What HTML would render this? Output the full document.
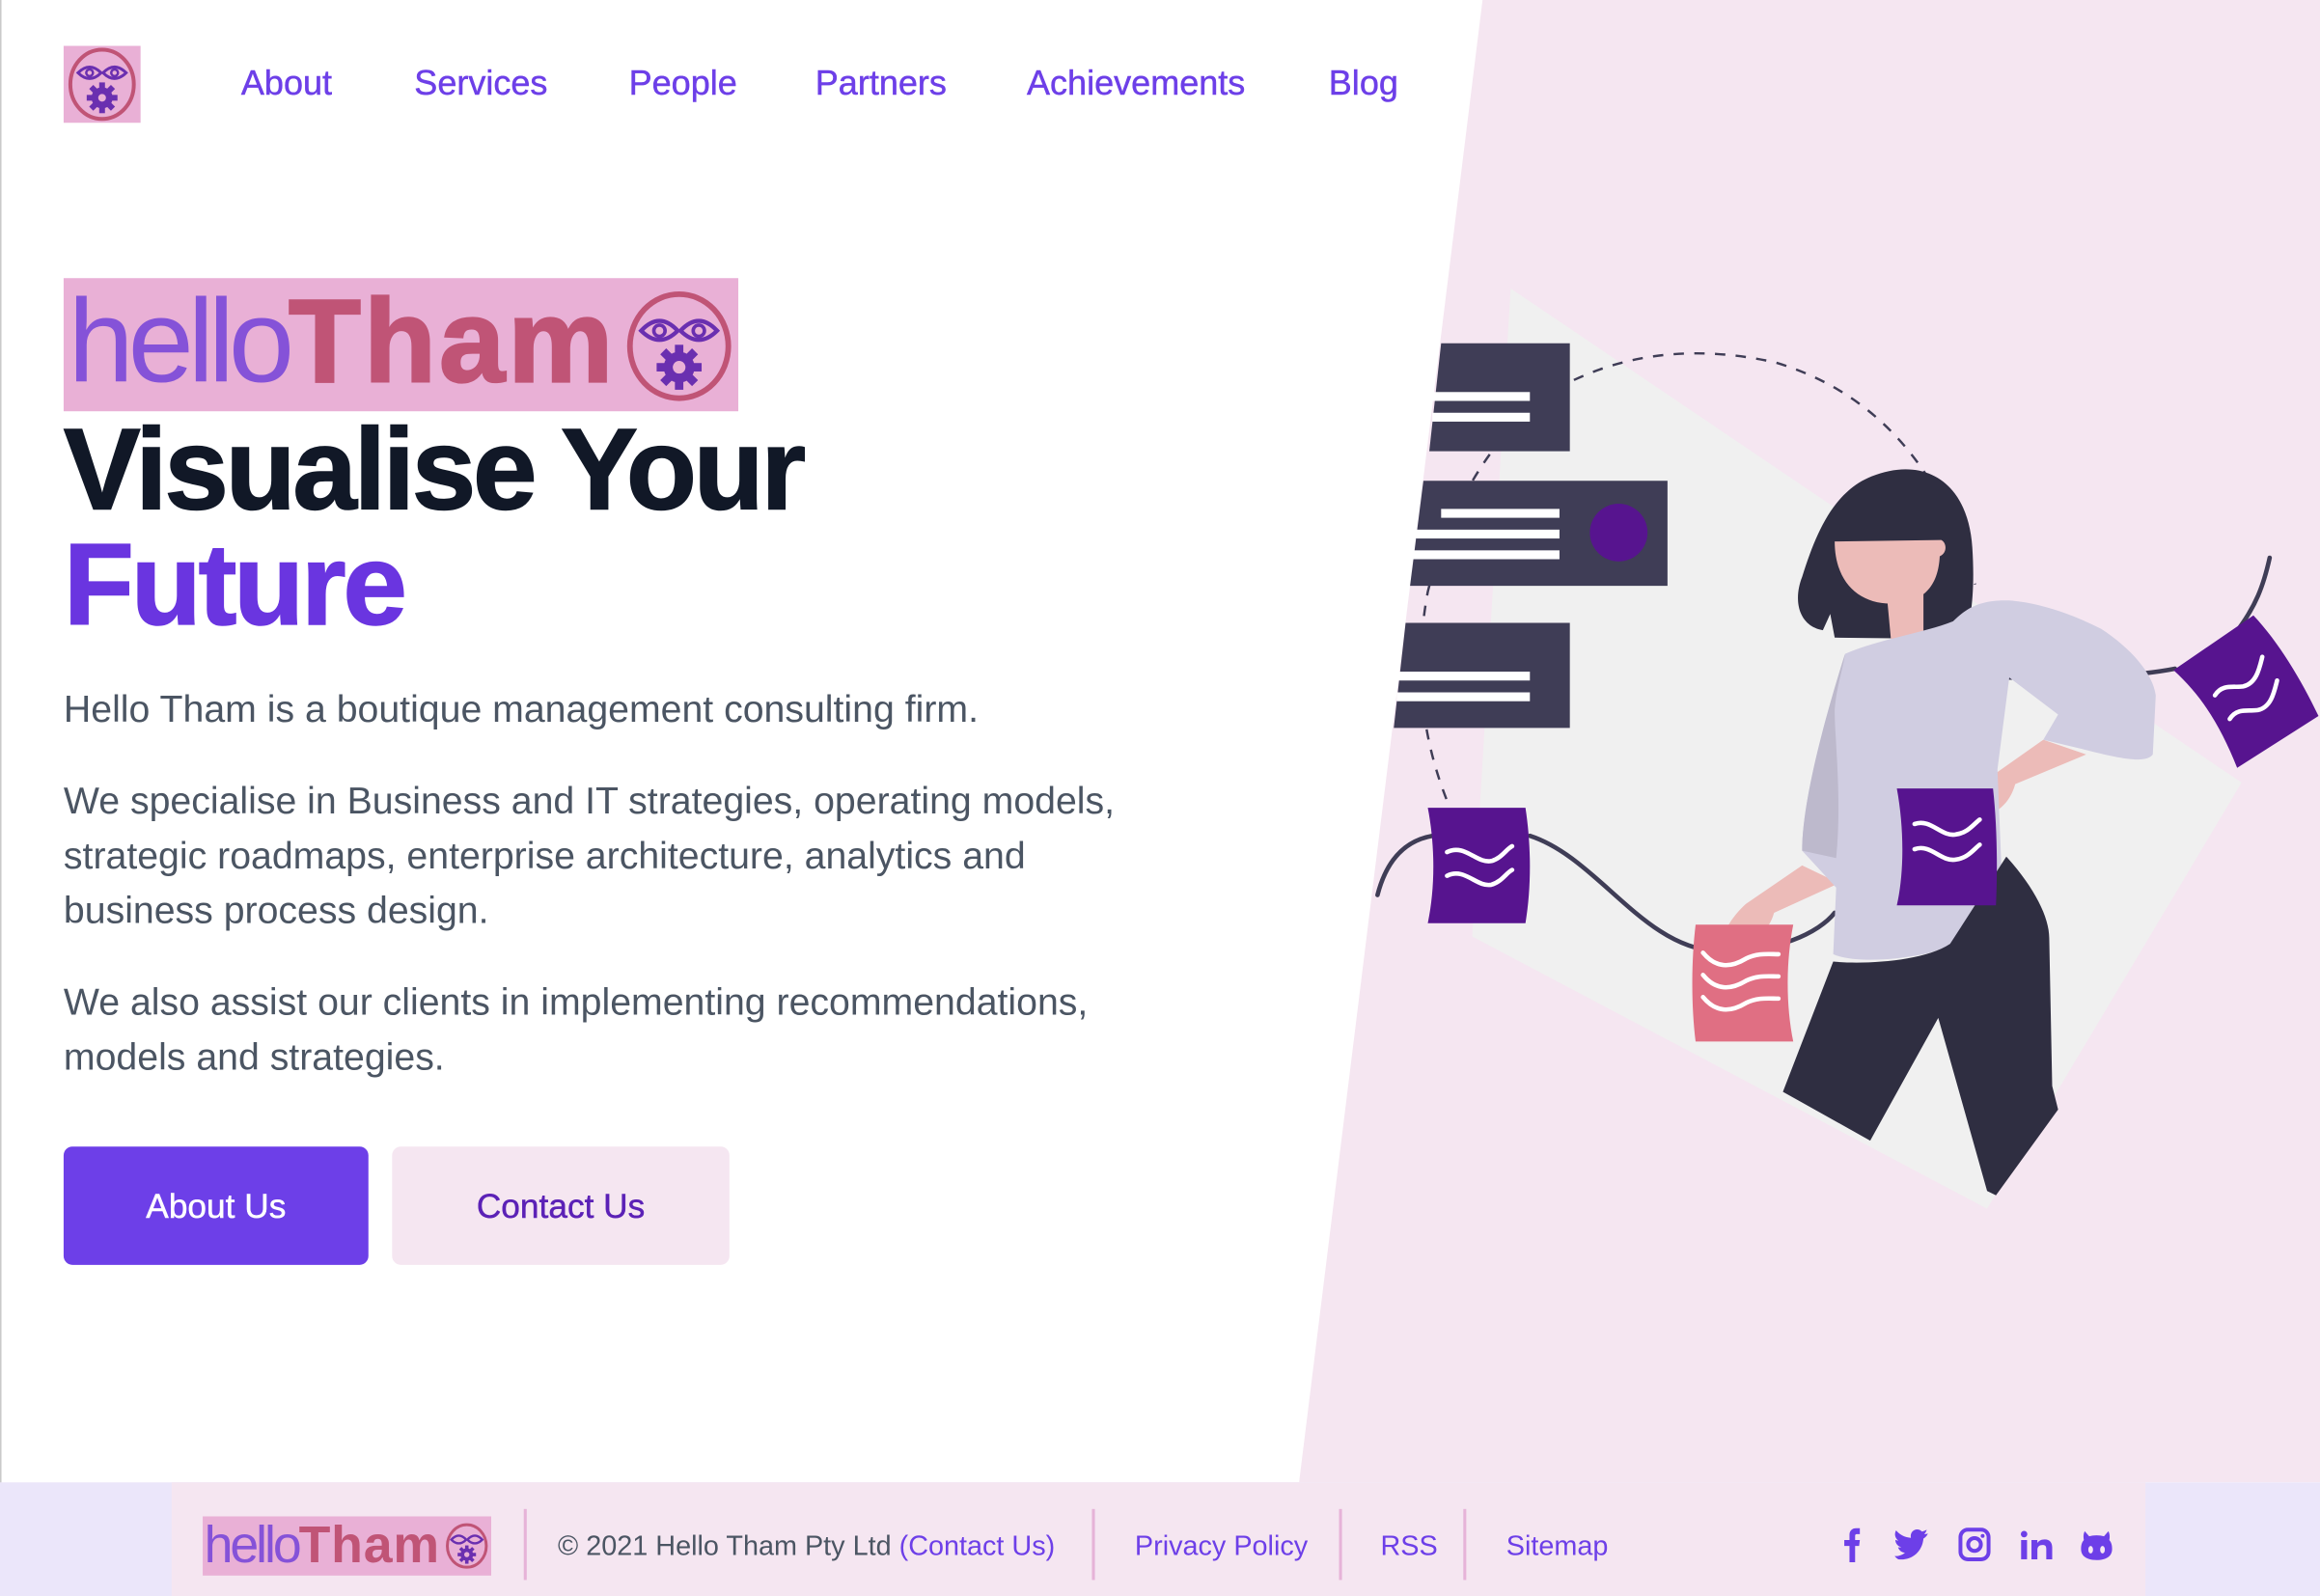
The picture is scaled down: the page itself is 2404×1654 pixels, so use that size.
<!DOCTYPE html>
<html><head><meta charset="utf-8">
<style>
html,body{margin:0;padding:0;width:2404px;height:1654px;overflow:hidden;background:#fff}
#w{position:absolute;left:0;top:0;width:1568px;height:1079px;transform:scale(1.53316);transform-origin:0 0;font-family:"Liberation Sans",Arial,sans-serif;overflow:hidden;background:#fff}
.a{position:absolute}
.nav{position:absolute;top:43px;font-size:23.5px;color:#6d3fe8;white-space:nowrap;-webkit-text-stroke:0.3px #6d3fe8}
.p{position:absolute;left:43px;font-size:25.6px;color:#4b5563;line-height:37px;white-space:nowrap}
.ft{position:absolute;top:1034px;font-size:18.8px;color:#4b5563;white-space:nowrap}
.fl{color:#6d3fe8}
.div{position:absolute;top:1020px;width:2px;height:48px;background:#e6b3d8}
</style></head><body><div id="w">
<div class="a" style="left:0;top:0;width:1568px;height:1002px;background:#f5e6f1;clip-path:polygon(1002px 0,1568px 0,1568px 1002px,878px 1002px)"></div>
<div class="a" style="left:0;top:0;width:1px;height:1079px;background:#c9c9c9"></div>

<div class="a" style="left:43px;top:31px;width:52px;height:52px;background:#e9b0d6">
<svg width="52" height="52" viewBox="0 0 80 80"><ellipse cx="40" cy="40" rx="33" ry="36" fill="none" stroke="#c05476" stroke-width="4"/><path d="M15 28 Q27 16 39 28 Q27 40 15 28Z M41 28 Q53 16 65 28 Q53 40 41 28Z" fill="none" stroke="#6a2fb0" stroke-width="3"/><circle cx="27" cy="28" r="3.5" fill="none" stroke="#6a2fb0" stroke-width="2.5"/><circle cx="53" cy="28" r="3.5" fill="none" stroke="#6a2fb0" stroke-width="2.5"/><g fill="#6a2fb0"><circle cx="40" cy="54" r="11"/><rect x="37" y="38" width="6" height="32"/><rect x="24" y="51" width="32" height="6"/><rect x="37" y="38" width="6" height="32" transform="rotate(45 40 54)"/><rect x="37" y="38" width="6" height="32" transform="rotate(-45 40 54)"/></g><circle cx="40" cy="54" r="4" fill="#e9b0d6"/></svg></div>
<div class="nav" style="left:163px">About</div>
<div class="nav" style="left:280px">Services</div>
<div class="nav" style="left:425px">People</div>
<div class="nav" style="left:551px">Partners</div>
<div class="nav" style="left:694px">Achievements</div>
<div class="nav" style="left:898px">Blog</div>

<div class="a" style="left:43px;top:188px;width:456px;height:90px;background:#e9b0d6;overflow:hidden">
<div class="a" style="left:3px;top:-2px;font-size:80px;line-height:90px;white-space:nowrap"><span style="color:#8552d8;letter-spacing:-4px">hello</span><b style="color:#c05476;letter-spacing:2px;-webkit-text-stroke:1.5px #c05476">Tham</b></div>
<svg class="a" style="left:378px;top:7px" width="76" height="78" viewBox="0 0 80 80"><ellipse cx="40" cy="40" rx="35" ry="37" fill="none" stroke="#c05476" stroke-width="4"/><path d="M13 29 Q26 15 39 29 Q26 42 13 29Z M41 29 Q54 15 67 29 Q54 42 41 29Z" fill="none" stroke="#6a2fb0" stroke-width="3"/><circle cx="26" cy="29" r="4" fill="none" stroke="#6a2fb0" stroke-width="2.5"/><circle cx="54" cy="29" r="4" fill="none" stroke="#6a2fb0" stroke-width="2.5"/><g fill="#6a2fb0"><circle cx="40" cy="55" r="11"/><rect x="37" y="39" width="6" height="32"/><rect x="24" y="52" width="32" height="6"/><rect x="37" y="39" width="6" height="32" transform="rotate(45 40 55)"/><rect x="37" y="39" width="6" height="32" transform="rotate(-45 40 55)"/></g><circle cx="40" cy="55" r="4.5" fill="#e9b0d6"/></svg>
</div>

<div class="a" style="left:43px;top:278px;font-size:78px;line-height:78px;font-weight:bold;letter-spacing:-2.1px;color:#111827;white-space:nowrap;-webkit-text-stroke:1px #111827">Visualise Your<br><span style="color:#6a35e0;-webkit-text-stroke:1px #6a35e0">Future</span></div>

<div class="p" style="top:462px">Hello Tham is a boutique management consulting firm.</div>
<div class="p" style="top:524px">We specialise in Business and IT strategies, operating models,<br>strategic roadmaps, enterprise architecture, analytics and<br>business process design.</div>
<div class="p" style="top:660px">We also assist our clients in implementing recommendations,<br>models and strategies.</div>

<div class="a" style="left:43px;top:775px;width:206px;height:80px;background:#6d3fe8;border-radius:6px;color:#fff;font-size:23px;line-height:80px;text-align:center;-webkit-text-stroke:0.3px #fff">About Us</div>
<div class="a" style="left:265px;top:775px;width:228px;height:80px;background:#f5e6f1;border-radius:6px;color:#5b21b6;font-size:23px;line-height:80px;text-align:center;-webkit-text-stroke:0.3px #5b21b6">Contact Us</div>

<svg class="a" style="left:0;top:0" width="1568" height="1002" viewBox="0 0 1568 1002">
<polygon points="1021,195 1515,529 1343,817 995,633" fill="#f0f0f0"/>
<path d="M983 553 Q950 480 965 400 Q985 320 1040 270 Q1110 225 1200 245 Q1300 275 1335 395" fill="none" stroke="#3f3d56" stroke-width="1.6" stroke-dasharray="7 7"/>
<polygon points="974,232 1061,232 1061,305 966,305" fill="#3f3d56"/>
<rect x="968" y="265" width="66" height="6" fill="#fff"/><rect x="968" y="279" width="66" height="6" fill="#fff"/>
<polygon points="962,325 1127,325 1127,396 953,396" fill="#3f3d56"/>
<rect x="974" y="344" width="80" height="6" fill="#fff"/><rect x="957" y="358" width="97" height="6" fill="#fff"/><rect x="955" y="372" width="99" height="6" fill="#fff"/>
<circle cx="1094" cy="360" r="19.5" fill="#57148f"/>
<polygon points="950,421 1061,421 1061,492 942,492" fill="#3f3d56"/>
<rect x="945" y="454" width="89" height="6" fill="#fff"/><rect x="944" y="468" width="90" height="6" fill="#fff"/>
<path d="M931 605 Q940 570 968 565 M1034 565 C1080 580 1110 640 1160 643 C1200 645 1230 630 1240 617" fill="none" stroke="#3f3d56" stroke-width="3" stroke-linecap="round"/>
<path d="M1358 458 C1400 458 1440 458 1470 452 M1510 429 C1525 410 1530 395 1534 377" fill="none" stroke="#3f3d56" stroke-width="3" stroke-linecap="round"/>
<path d="M1265 322 C1300 308 1330 325 1333 370 C1335 400 1332 420 1328 432 L1240 431 L1237 415 L1232 426 C1215 423 1212 405 1218 390 C1228 358 1240 332 1265 322Z" fill="#2f2e41"/>
<path d="M1240 366 L1312 365 C1316 367 1316 374 1311 376 C1310 396 1300 408 1278 408 C1255 408 1240 392 1240 366Z" fill="#ecbbb8"/>
<path d="M1275 400 L1278 432 L1300 428 L1300 400Z" fill="#ecbbb8"/>
<path d="M1218 585 L1180 611 C1170 620 1163 632 1166 637 C1180 642 1195 632 1199 617 L1243 597Z" fill="#ecbbb8"/>
<path d="M1381 500 L1347 524 C1335 535 1325 545 1329 551 C1345 555 1358 545 1362 530 L1410 510Z" fill="#ecbbb8"/>
<path d="M1247 442 C1270 432 1300 428 1320 420 C1330 410 1340 405 1360 406 C1380 408 1400 415 1420 425 C1440 438 1455 455 1457 470 L1455 510 C1450 517 1430 512 1406 506 L1381 500 L1391 483 L1358 458 L1350 520 L1353 594 C1345 620 1330 638 1300 645 C1275 650 1250 650 1239 645 L1241 600 L1218 575 C1218 540 1235 480 1247 442Z" fill="#d0cde1"/>
<path d="M1247 442 C1235 480 1218 540 1218 575 L1241 580 C1245 540 1240 500 1240 480 C1241 465 1245 455 1247 442Z" fill="#bdb9cc"/>
<path d="M1239 650 C1260 652 1300 650 1318 638 L1356 579 C1375 600 1385 620 1385 634 L1387 734 L1391 750 L1349 808 L1343 805 L1310 688 L1264 771 L1205 738Z" fill="#2f2e41"/>
<path d="M965 546 L1031 546 C1035 572 1035 600 1031 624 L965 624 C970 600 970 572 965 546Z" fill="#57148f"/>
<path d="M978 576 C990 570 998 584 1008 582 C1015 580 1018 574 1022 572 M978 592 C990 586 998 600 1008 598 C1015 596 1018 590 1022 588" fill="none" stroke="#fff" stroke-width="3" stroke-linecap="round"/>
<path d="M1146 625 L1212 625 C1207 650 1207 680 1212 704 L1146 704 C1143 680 1143 650 1146 625Z" fill="#e06f83"/>
<path d="M1151 644 C1160 655 1170 654 1180 648 C1188 644 1195 645 1202 645 M1151 659 C1160 670 1170 669 1180 663 C1188 659 1195 660 1202 660 M1151 674 C1160 685 1170 684 1180 678 C1188 674 1195 675 1202 675" fill="none" stroke="#fff" stroke-width="3" stroke-linecap="round"/>
<path d="M1282 533 L1347 533 C1350 560 1350 590 1349 612 L1282 612 C1287 590 1287 560 1282 533Z" fill="#57148f"/>
<path d="M1294 557 C1305 553 1312 566 1322 564 C1330 563 1334 557 1338 554 M1294 574 C1305 570 1312 583 1322 581 C1330 580 1334 574 1338 571" fill="none" stroke="#fff" stroke-width="3" stroke-linecap="round"/>
<path d="M1469 453 L1523 416 C1540 434 1555 459 1567 484 L1512 519 C1502 494 1490 472 1469 453Z" fill="#57148f"/>
<path d="M1497 470 C1502 462 1510 465 1516 464 C1525 462 1527 452 1529 444 M1507 486 C1512 478 1520 481 1526 480 C1535 478 1537 468 1539 460" fill="none" stroke="#fff" stroke-width="3" stroke-linecap="round"/>
</svg>

<div class="a" style="left:0;top:1002px;width:1568px;height:77px;background:#ebe6fa"></div>
<div class="a" style="left:116px;top:1002px;width:1334px;height:77px;background:#f5e6f1"></div>
<div class="a" style="left:137px;top:1025px;width:195px;height:40px;background:#e9b0d6;overflow:hidden">
<div class="a" style="left:1px;top:0;font-size:35px;line-height:40px;white-space:nowrap"><span style="color:#8552d8;letter-spacing:-2px">hello</span><b style="color:#c05476;letter-spacing:0.5px">Tham</b></div>
<svg class="a" style="left:163px;top:3px" width="31" height="34" viewBox="0 0 80 80"><ellipse cx="40" cy="40" rx="34" ry="37" fill="none" stroke="#c05476" stroke-width="5"/><path d="M13 29 Q26 15 39 29 Q26 42 13 29Z M41 29 Q54 15 67 29 Q54 42 41 29Z" fill="none" stroke="#6a2fb0" stroke-width="4"/><g fill="#6a2fb0"><circle cx="40" cy="55" r="11"/><rect x="37" y="39" width="6" height="32"/><rect x="24" y="52" width="32" height="6"/><rect x="37" y="39" width="6" height="32" transform="rotate(45 40 55)"/><rect x="37" y="39" width="6" height="32" transform="rotate(-45 40 55)"/></g><circle cx="40" cy="55" r="4.5" fill="#e9b0d6"/></svg>
</div>
<div class="div" style="left:354px"></div>
<div class="ft" style="left:377px">© 2021 Hello Tham Pty Ltd <span class="fl">(Contact Us)</span></div>
<div class="div" style="left:738px"></div>
<div class="ft fl" style="left:767px">Privacy Policy</div>
<div class="div" style="left:905px"></div>
<div class="ft fl" style="left:933px">RSS</div>
<div class="div" style="left:989px"></div>
<div class="ft fl" style="left:1018px">Sitemap</div>

<svg class="a" style="left:1238px;top:1030px" width="200" height="30" viewBox="0 0 200 30" fill="#6d3fe8">
<path d="M12 26 V15 H8.5 V11 H12 V7.5 C12 4.5 14 3 16.5 3 H19 V7 H17 C16 7 15.8 7.5 15.8 8.5 V11 H19 L18.5 15 H15.8 V26Z"/>
<path d="M45 24 C53 25 61 20 62 10 C63.5 9 64.5 8 65 6.5 C64 7 63 7 62.5 7 C63.5 6 64 5 64.2 4 C63 4.7 62 5 61 5.3 C58 2 52.5 4.5 53.5 9.5 C49 9.3 45.5 7 43.5 4.5 C42 7 43 10 45 11.3 C44 11.3 43.5 11 43 10.8 C43 13.5 45 15.3 47 15.8 C46.3 16 45.5 16 44.8 15.9 C45.5 18 47.3 19.5 49.5 19.6 C47.5 21.2 45 22 42.5 21.8 C43.3 22.7 44 23.4 45 24Z"/>
<rect x="87" y="4" width="19" height="20" rx="5" fill="none" stroke="#6d3fe8" stroke-width="2.6"/><circle cx="96.5" cy="14" r="4.3" fill="none" stroke="#6d3fe8" stroke-width="2.6"/><circle cx="102" cy="8.2" r="1.3"/>
<circle cx="130" cy="7" r="2.2"/><rect x="128" y="11" width="4" height="13"/><path d="M135 24 V11 H139 V13 C140 11.5 141.5 10.6 144 10.6 C147.5 10.6 149 13 149 16 V24 H145 V17 C145 15 144.3 14.3 142.5 14.3 C140.5 14.3 139 15.3 139 17.5 V24Z"/>
<path d="M171 5 L174 8.5 C177 7.6 181 7.6 184 8.5 L187 5 C188 7 188 9 187.6 11 C189 12.6 189.5 14.5 189.5 17 C189.5 22 185.5 24.5 179 24.5 C172.5 24.5 168.5 22 168.5 17 C168.5 14.5 169 12.6 170.4 11 C170 9 170 7 171 5Z"/>
<ellipse cx="175" cy="17.5" rx="1.6" ry="2.5" fill="#f5e6f1"/><ellipse cx="183" cy="17.5" rx="1.6" ry="2.5" fill="#f5e6f1"/>
</svg>
</div></body></html>
